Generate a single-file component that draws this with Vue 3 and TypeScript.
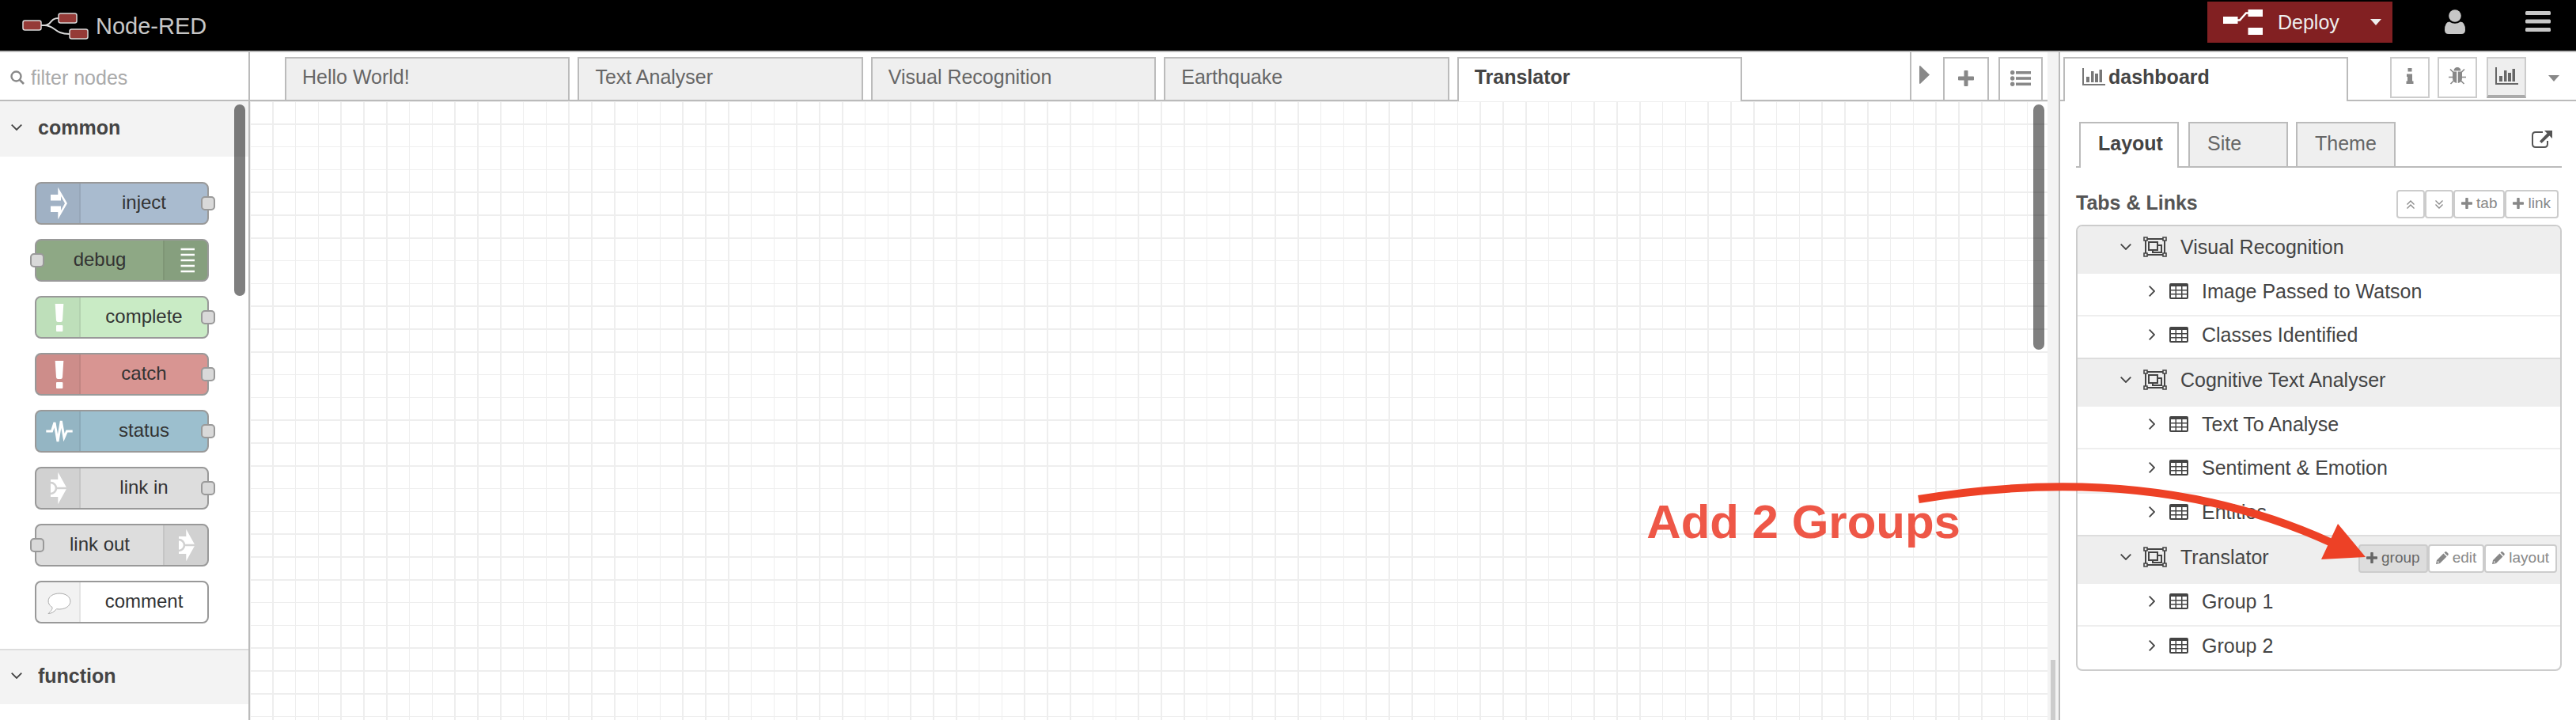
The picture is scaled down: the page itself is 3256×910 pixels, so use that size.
<script setup lang="ts">
import { ref } from 'vue'

interface PaletteNode {
  label: string
  icon: string
  tone: string
  side: 'left' | 'right'
  port: 'in' | 'out' | 'none'
}

interface DashboardTab {
  name: string
  groups: string[]
  actions: boolean
}

const filter = ref('')

const nodes: PaletteNode[] = [
  { label: 'inject', icon: 'n-inject', tone: 'inject', side: 'left', port: 'out' },
  { label: 'debug', icon: 'n-debug', tone: 'debug', side: 'right', port: 'in' },
  { label: 'complete', icon: 'n-alert', tone: 'complete', side: 'left', port: 'out' },
  { label: 'catch', icon: 'n-alert', tone: 'catch', side: 'left', port: 'out' },
  { label: 'status', icon: 'n-status', tone: 'status', side: 'left', port: 'out' },
  { label: 'link in', icon: 'n-link', tone: 'link', side: 'left', port: 'out' },
  { label: 'link out', icon: 'n-link', tone: 'link', side: 'right', port: 'in' },
  { label: 'comment', icon: 'n-comment', tone: 'comment', side: 'left', port: 'none' },
]

const flows = ['Hello World!', 'Text Analyser', 'Visual Recognition', 'Earthquake', 'Translator']
const activeFlow = ref('Translator')

const panels = ['Layout', 'Site', 'Theme']
const activePanel = ref('Layout')

const tabs: DashboardTab[] = [
  { name: 'Visual Recognition', groups: ['Image Passed to Watson', 'Classes Identified'], actions: false },
  { name: 'Cognitive Text Analyser', groups: ['Text To Analyse', 'Sentiment & Emotion', 'Entities'], actions: false },
  { name: 'Translator', groups: ['Group 1', 'Group 2'], actions: true },
]
</script>

<template>
  <div class="editor">
    <svg class="defs" width="0" height="0" aria-hidden="true">
      <symbol id="n-inject" viewBox="0 0 56 50">
        <path fill="#fff" d="M18 14H27.3V4.7L39 25 27.3 45.3V36H18V28.5H31V34L36 25 31 16V21.5H18Z" />
      </symbol>
      <symbol id="n-debug" viewBox="0 0 56 50">
        <path stroke="#fff" stroke-width="2.4" d="M20.5 11H38M20.5 18H38M20.5 25H38M20.5 32H38M20.5 39H38" />
      </symbol>
      <symbol id="n-alert" viewBox="0 0 56 50">
        <path fill="#fff" d="M23.7 8H34.3L33 29Q32.5 31 31 31H27Q25.5 31 25 29Z" />
        <rect x="25" y="35" width="8.4" height="8" rx="1" fill="#fff" />
      </symbol>
      <symbol id="n-status" viewBox="0 0 56 50">
        <path fill="none" stroke="#fff" stroke-width="3" d="M12.3 25H19.5L23 14 27 38 31.3 12 35 33 38.5 25H45.7" />
      </symbol>
      <symbol id="n-link" viewBox="0 0 56 50">
        <path fill="#fff" d="M18 14H27.3V4.7L38.5 25 27.3 45.3V36H18Z" />
        <path fill="none" stroke="#d1d1d1" stroke-width="2.6" d="M18 18A7 7 0 0 1 18 32M25 25H39" />
      </symbol>
      <symbol id="n-comment" viewBox="0 0 56 50">
        <path fill="#fff" stroke="#aaa" d="M20 31.5C12 27 13 14.5 29 14C47 14 48 33.5 29 34L25.5 33.7C22 37.5 19 39.5 15 39.5C18 36.5 20.5 34.5 20 31.5Z" />
      </symbol>
      <symbol id="i-down" viewBox="0 0 14 8"><path fill="none" stroke="currentColor" stroke-width="1.8" d="M.7.7 7 7 13.3.7" /></symbol>
      <symbol id="i-right" viewBox="0 0 8 14"><path fill="none" stroke="currentColor" stroke-width="1.8" d="M.7.7 7 7 .7 13.3" /></symbol>
      <symbol id="i-caret" viewBox="0 0 14 8"><path fill="currentColor" d="M0 0H14L7 8Z" /></symbol>
      <symbol id="i-plus" viewBox="0 0 20 20"><path fill="currentColor" d="M8.5 0H11.5Q12.5 0 12.5 1V7.5H19Q20 7.5 20 8.5V11.5Q20 12.5 19 12.5H12.5V19Q12.5 20 11.5 20H8.500Q7.5 20 7.5 19V12.5H1Q0 12.5 0 11.5V8.5Q0 7.5 1 7.5H7.5V1Q7.5 0 8.5 0Z" /></symbol>
      <symbol id="i-chart" viewBox="0 0 29 22">
        <path fill="currentColor" d="M0 0H2V20H29V22H0ZM5 11H9V18H5ZM11 4H14.5V18H11ZM16 7H20V18H16ZM21.5 2H25V18H21.5Z" />
      </symbol>
      <symbol id="i-group" viewBox="0 0 30 26">
        <g fill="none" stroke="currentColor" stroke-width="2">
          <path d="M4 3H26M4 23H26M3 4V22M27 4V22" />
          <path d="M7 7H18V17H7Z" />
          <path d="M18 11H23V20H12V17" />
        </g>
        <g fill="#eee" stroke="currentColor" stroke-width="1.6">
          <path d="M1 1H5V5H1ZM25 1H29V5H25ZM1 21H5V25H1ZM25 21H29V25H25Z" />
        </g>
      </symbol>
      <symbol id="i-table" viewBox="0 0 24 20">
        <path fill="currentColor" fill-rule="evenodd" d="M2 0H22Q24 0 24 2V18Q24 20 22 20H2Q0 20 0 18V2Q0 0 2 0ZM2 4V8H7.5V4ZM9 4V8H15V4ZM16.5 4V8H22V4ZM2 9.5V13H7.5V9.5ZM9 9.5V13H15V9.5ZM16.5 9.5V13H22V9.5ZM2 14.5V18H7.5V14.5ZM9 14.5V18H15V14.5ZM16.5 14.5V18H22V14.5Z" />
      </symbol>
      <symbol id="i-pencil" viewBox="0 0 16 16">
        <path fill="currentColor" fill-rule="evenodd" d="M0 16 1 11 9.5 2.5 13.5 6.5 5 15ZM2.500 12 4 13.5 2.8 14.2 1.8 13.2ZM10.5 1.5 12 0Q13 0 14 1L15.5 2.5Q16 3.5 15.5 4.5L14.5 5.5Z" />
      </symbol>
    </svg>

    <header class="header">
      <div class="brand">
        <svg class="logo" viewBox="0 0 84 34" aria-hidden="true">
          <path fill="none" stroke="#d9d9d9" stroke-width="2" d="M24 16H28C38 16 34 7 46 7M28 16C42 16 40 27 60 27" />
          <g fill="#953a37" stroke="#d9d9d9" stroke-width="1.5">
            <rect x="1" y="10" width="23" height="12" rx="2.5" />
            <rect x="46" y="1" width="23" height="12" rx="2.5" />
            <rect x="60" y="21" width="23" height="12" rx="2.5" />
          </g>
        </svg>
        <span class="brand-name">Node-RED</span>
      </div>
      <div class="header-tools">
        <button class="deploy" type="button">
          <svg class="deploy-icon" viewBox="0 0 50 32" aria-hidden="true">
            <path fill="none" stroke="#fff" stroke-width="2.5" d="M18 13.5H21L29 4.5H32" />
            <path fill="#fff" d="M0 9H18.5V18H0ZM31.5 0H50V9H31.5ZM31.5 23H50V32H31.5Z" />
          </svg>
          <span>Deploy</span>
          <svg class="caret" aria-hidden="true"><use href="#i-caret" /></svg>
        </button>
        <button class="icon-button user" type="button" aria-label="User">
          <svg viewBox="0 0 26 32" aria-hidden="true">
            <path fill="#c7c7c7" d="M6 15.5Q13 20 20 15.5Q26 16 26 26Q26 31 21 31H5Q0 31 0 26Q0 16 6 15.5Z" />
            <circle cx="13" cy="8" r="7.8" fill="#c7c7c7" />
          </svg>
        </button>
        <button class="icon-button menu" type="button" aria-label="Menu">
          <svg viewBox="0 0 32 26" aria-hidden="true">
            <g fill="#c7c7c7"><rect width="32" height="5" rx="1.5" /><rect y="10.5" width="32" height="5" rx="1.5" /><rect y="21" width="32" height="5" rx="1.5" /></g>
          </svg>
        </button>
      </div>
    </header>

    <div class="body">
      <aside class="palette">
        <label class="search">
          <svg viewBox="0 0 18 18" aria-hidden="true">
            <circle cx="7.5" cy="7.5" r="6" fill="none" stroke="#888" stroke-width="2.4" />
            <path stroke="#888" stroke-width="2.6" d="M12 12 17 17" />
          </svg>
          <input v-model="filter" type="text" placeholder="filter nodes" aria-label="filter nodes" />
        </label>
        <div class="palette-list">
          <button class="category" type="button"><svg class="chev-down" aria-hidden="true"><use href="#i-down" /></svg>common</button>
          <div class="nodes">
            <div v-for="n in nodes" :key="n.label" class="node" :class="[n.tone, n.side, 'port-' + n.port]">
              <span class="node-icon"><svg width="56" height="50" aria-hidden="true"><use :href="'#' + n.icon" /></svg></span>
              <span class="node-label">{{ n.label }}</span>
            </div>
          </div>
          <button class="category lined" type="button"><svg class="chev-down" aria-hidden="true"><use href="#i-down" /></svg>function</button>
          <div class="scroll-thumb palette-thumb"></div>
        </div>
      </aside>

      <main class="workspace">
        <div class="tabbar">
          <div class="flow-tabs">
            <button v-for="f in flows" :key="f" type="button" class="tab" :class="{ active: f === activeFlow }" @click="activeFlow = f">{{ f }}</button>
          </div>
          <div class="tab-tools">
            <button class="scroll-right" type="button" aria-label="Scroll tabs">
              <svg viewBox="0 0 13 23" aria-hidden="true"><path fill="#888" d="M0 1Q0 0 1 0L13 11.5 1 23Q0 23 0 22Z" /></svg>
            </button>
            <button class="tool add" type="button" aria-label="Add flow"><svg width="20" height="20" aria-hidden="true"><use href="#i-plus" /></svg></button>
            <button class="tool" type="button" aria-label="List flows">
              <svg width="26" height="20" viewBox="0 0 26 20" aria-hidden="true">
                <g fill="#888"><circle cx="2.7" cy="2.7" r="2.7" /><circle cx="2.7" cy="10" r="2.7" /><circle cx="2.7" cy="17.3" r="2.7" /><rect x="7" y="1" width="19" height="3.6" /><rect x="7" y="8.2" width="19" height="3.6" /><rect x="7" y="15.5" width="19" height="3.6" /></g>
              </svg>
            </button>
          </div>
        </div>
        <div class="canvas"><div class="scroll-thumb canvas-thumb"></div></div>
      </main>

      <div class="separator"><div class="handle"></div></div>

      <aside class="sidebar">
        <div class="side-tabs">
          <button class="tab active side-tab" type="button"><svg width="29" height="22" aria-hidden="true"><use href="#i-chart" /></svg>dashboard</button>
          <div class="side-tools">
            <button class="side-tool" type="button" aria-label="Information">
              <svg width="10" height="20" viewBox="0 0 10 20" aria-hidden="true"><path fill="currentColor" d="M2.5 0H7.5V4.5H2.5ZM1 7.5H8V16.5H9.5V20H.5V16.5H2V11H1Z" /></svg>
            </button>
            <button class="side-tool" type="button" aria-label="Debug">
              <svg width="22" height="22" viewBox="0 0 22 22" aria-hidden="true">
                <path fill="currentColor" d="M6.5 4.5A4.5 4.5 0 0 1 15.5 4.5ZM5 5.5H10.2V20Q5 19 5 14ZM11.8 5.5H17V14Q17 19 11.8 20Z" />
                <path fill="none" stroke="currentColor" stroke-width="1.6" d="M2 2.5 6 6.5M20 2.5 16 6.5M0 12.5H5M22 12.5H17M2.5 21 6.5 17M19.5 21 15.5 17" />
              </svg>
            </button>
            <button class="side-tool pressed" type="button" aria-label="Dashboard"><svg width="29" height="22" aria-hidden="true"><use href="#i-chart" /></svg></button>
            <button class="side-more" type="button" aria-label="More"><svg class="caret" aria-hidden="true"><use href="#i-caret" /></svg></button>
          </div>
        </div>

        <div class="side-content">
          <div class="panel-tabs">
            <button v-for="p in panels" :key="p" type="button" class="tab" :class="{ active: p === activePanel }" @click="activePanel = p">{{ p }}</button>
            <a class="open-link" href="#" aria-label="Open dashboard">
              <svg width="26" height="24" viewBox="0 0 26 24" aria-hidden="true">
                <path fill="none" stroke="#555" stroke-width="2" d="M14 3H5Q1 3 1 7V18Q1 22 5 22H16Q20 22 20 18V14" />
                <path fill="#555" d="M16 1H26V11L22.5 7.5 12.5 17 10 14.5 19.5 4.5Z" />
              </svg>
            </a>
          </div>

          <div class="list-head">
            <h2>Tabs &amp; Links</h2>
            <div class="small-buttons">
              <button type="button" class="small square" aria-label="Collapse all"><svg width="10" height="11" viewBox="0 0 10 11" aria-hidden="true"><path fill="none" stroke="currentColor" stroke-width="1.3" d="M.5 5.5 5 1 9.5 5.5M.5 10.5 5 6 9.5 10.5" /></svg></button>
              <button type="button" class="small square" aria-label="Expand all"><svg width="10" height="11" viewBox="0 0 10 11" aria-hidden="true"><path fill="none" stroke="currentColor" stroke-width="1.3" d="M.5.5 5 5 9.5.5M.5 5.5 5 10 9.5 5.5" /></svg></button>
              <button type="button" class="small"><svg width="14" height="14" aria-hidden="true"><use href="#i-plus" /></svg>tab</button>
              <button type="button" class="small"><svg width="14" height="14" aria-hidden="true"><use href="#i-plus" /></svg>link</button>
            </div>
          </div>

          <ul class="tree">
            <li v-for="t in tabs" :key="t.name" class="tree-tab">
              <div class="tree-head">
                <svg class="chev-down" aria-hidden="true"><use href="#i-down" /></svg>
                <svg class="group-icon" width="30" height="26" aria-hidden="true"><use href="#i-group" /></svg>
                <span>{{ t.name }}</span>
                <div v-if="t.actions" class="small-buttons">
                  <button type="button" class="small hovered"><svg width="14" height="14" aria-hidden="true"><use href="#i-plus" /></svg>group</button>
                  <button type="button" class="small"><svg width="16" height="16" aria-hidden="true"><use href="#i-pencil" /></svg>edit</button>
                  <button type="button" class="small"><svg width="16" height="16" aria-hidden="true"><use href="#i-pencil" /></svg>layout</button>
                </div>
              </div>
              <ul class="tree-groups">
                <li v-for="g in t.groups" :key="g">
                  <svg class="chev-right" width="8" height="14" aria-hidden="true"><use href="#i-right" /></svg>
                  <svg class="table-icon" width="24" height="20" aria-hidden="true"><use href="#i-table" /></svg>
                  <span>{{ g }}</span>
                </li>
              </ul>
            </li>
          </ul>
        </div>
      </aside>
    </div>

    <div class="callout">Add 2 Groups</div>
    <svg class="callout-arrow" width="568" height="104" viewBox="0 0 568 104" aria-hidden="true">
      <path fill="none" stroke="#ed4126" stroke-width="10" d="M1 25Q296 -24 523 80" />
      <path fill="#ed4126" d="M531 56 566 98 510 101Z" />
    </svg>
  </div>
</template>

<style>
body {
  margin: 0;
}
</style>

<style scoped>
.editor {
  position: relative;
  display: flex;
  flex-direction: column;
  height: 100vh;
  overflow: hidden;
  background: #fff;
  color: #444;
  font: 25px/30px "Liberation Sans", Arial, sans-serif;
}
.editor *,
.editor *::after {
  box-sizing: border-box;
}
.defs {
  position: absolute;
}
svg {
  display: block;
  flex: none;
}
button {
  margin: 0;
  padding: 0;
  border: 0;
  border-radius: 0;
  background: none;
  color: inherit;
  font: inherit;
  text-align: left;
  cursor: pointer;
}
ul {
  margin: 0;
  padding: 0;
  list-style: none;
}
.header {
  display: flex;
  justify-content: space-between;
  height: 66px;
  background: #000;
  border-bottom: 2px solid #bbb;
}
.brand {
  display: flex;
  gap: 9px;
  padding: 16px 0 0 28px;
}
.logo {
  width: 84px;
  height: 34px;
}
.brand-name {
  color: #c7c7c7;
  font-size: 29px;
  line-height: 34px;
}
.header-tools {
  display: flex;
  align-items: flex-start;
  padding: 2px 32px 0 0;
}
.deploy {
  display: flex;
  align-items: center;
  width: 234px;
  height: 52px;
  padding: 0 14px 0 20px;
  background: #822022;
  color: #eee;
  line-height: 52px;
}
.deploy-icon {
  width: 50px;
  height: 32px;
  margin-right: 19px;
}
.caret {
  width: 14px;
  height: 8px;
}
.deploy .caret {
  margin-left: auto;
}
.icon-button svg {
  width: 100%;
}
.user {
  width: 26px;
  margin: 10px 0 0 66px;
}
.menu {
  width: 32px;
  margin: 12px 0 0 76px;
}
.body {
  display: flex;
  flex: 1;
  min-height: 0;
}
.palette {
  display: flex;
  flex-direction: column;
  width: 316px;
  border-right: 2px solid #bbb;
}
.search {
  display: flex;
  align-items: center;
  gap: 8px;
  height: 62px;
  padding: 4px 12px 0 13px;
  border-bottom: 2px solid #bbb;
}
.search svg {
  width: 18px;
  height: 18px;
}
.search input {
  width: 100%;
  min-width: 0;
  height: 40px;
  padding: 0;
  border: 0;
  outline: 0;
  background: none;
  color: #444;
  font: inherit;
}
.search input::placeholder {
  color: #aaa;
  opacity: 1;
}
.palette-list {
  position: relative;
  flex: 1;
  min-height: 0;
  overflow: hidden;
}
.category {
  display: flex;
  align-items: center;
  gap: 20px;
  width: 100%;
  height: 70px;
  padding: 0 14px 4px;
  background: #f3f3f3;
  font-weight: bold;
}
.category.lined {
  border-top: 2px solid #ddd;
}
.chev-down {
  width: 14px;
  height: 8px;
}
.nodes {
  display: grid;
  gap: 18px;
  padding: 32px 50px 32px 44px;
}
.node {
  position: relative;
  display: flex;
  height: 54px;
  border: 2px solid #999;
  border-radius: 8px;
  color: #333;
  font-size: 24px;
}
.node.right {
  flex-direction: row-reverse;
}
.node-icon {
  width: 56px;
  background: rgba(0, 0, 0, 0.05);
  border-right: 2px solid rgba(0, 0, 0, 0.06);
  border-radius: 6px 0 0 6px;
}
.node.right .node-icon {
  border-right: 0;
  border-left: 2px solid rgba(0, 0, 0, 0.06);
  border-radius: 0 6px 6px 0;
}
.node-label {
  flex: 1;
  line-height: 48px;
  text-align: center;
}
.node::after {
  content: "";
  position: absolute;
  top: 16px;
  width: 18px;
  height: 18px;
  border: 2px solid #999;
  border-radius: 5px;
  background: #d9d9d9;
}
.port-out::after {
  right: -10px;
}
.port-in::after {
  left: -8px;
}
.port-none::after {
  display: none;
}
.inject {
  background: #a9bbcf;
}
.debug {
  background: #8ea885;
}
.complete {
  background: #c9ebc5;
}
.catch {
  background: #d89592;
}
.status {
  background: #9cbfce;
}
.link {
  background: #ddd;
}
.comment {
  background: #fff;
}
.scroll-thumb {
  position: absolute;
  width: 14px;
  border-radius: 7px;
  background: rgba(0, 0, 0, 0.5);
}
.palette-thumb {
  top: 4px;
  right: 4px;
  height: 242px;
}
.workspace {
  display: flex;
  flex: 1;
  flex-direction: column;
  min-width: 0;
}
.tabbar {
  display: flex;
  justify-content: space-between;
  height: 62px;
  padding: 0 6px 0 44px;
  border-bottom: 2px solid #bbb;
}
.flow-tabs {
  display: flex;
  flex: 0 1 1842px;
  gap: 10px;
  min-width: 0;
  padding-top: 6px;
}
.tab {
  border: 2px solid #bbb;
  border-bottom: 0;
  background: #efefef;
  color: #666;
}
.tab.active {
  margin-bottom: -2px;
  background: #fff;
  color: #444;
  font-weight: bold;
}
.flow-tabs .tab {
  flex: 1;
  height: 54px;
  padding: 0 20px 6px;
}
.flow-tabs .tab.active {
  height: 56px;
  padding-bottom: 8px;
}
.tab-tools {
  display: flex;
  align-items: flex-end;
}
.scroll-right {
  height: 60px;
  width: 42px;
  padding: 0 0 4px 10px;
  border-left: 2px solid #bbb;
}
.scroll-right svg {
  width: 13px;
  height: 23px;
}
.tool {
  display: flex;
  align-items: center;
  justify-content: center;
  width: 56px;
  height: 54px;
  padding-bottom: 2px;
  border: 2px solid #bbb;
  border-bottom: 0;
  color: #888;
}
.tool.add {
  width: 58px;
  margin-right: 12px;
}
.canvas {
  --line: #eee;
  position: relative;
  flex: 1;
  background-image:
    linear-gradient(to bottom, var(--line) 1px, transparent 1px 28px, var(--line) 28px 30px, transparent 30px 57px, var(--line) 57px 58px, transparent 58px 86px, var(--line) 86px 87px, transparent 87px 114px, var(--line) 114px 116px, transparent 116px 143px, var(--line) 143px),
    linear-gradient(to right, var(--line) 1px, transparent 1px 28px, var(--line) 28px 30px, transparent 30px 57px, var(--line) 57px 58px, transparent 58px 86px, var(--line) 86px 87px, transparent 87px 114px, var(--line) 114px 116px, transparent 116px 143px, var(--line) 143px);
  background-size: 144px 144px;
}
.canvas-thumb {
  top: 4px;
  right: 4px;
  height: 310px;
}
.separator {
  display: flex;
  align-items: flex-end;
  width: 14px;
  padding-left: 4px;
  background: #f3f3f3;
}
.handle {
  width: 6px;
  height: 76px;
  background: #ccc;
}
.sidebar {
  width: 654px;
  border-left: 2px solid #bbb;
}
.side-tabs {
  display: flex;
  justify-content: space-between;
  height: 62px;
  padding: 6px 21px 0 4px;
  border-bottom: 2px solid #bbb;
}
.side-tab {
  display: flex;
  align-items: center;
  gap: 4px;
  width: 360px;
  height: 56px;
  padding: 0 22px 8px;
}
.side-tab svg {
  color: #777;
}
.side-tools {
  display: flex;
}
.side-tool {
  display: flex;
  align-items: center;
  justify-content: center;
  width: 50px;
  height: 52px;
  margin-right: 10px;
  padding-bottom: 4px;
  border: 2px solid #ccc;
  color: #888;
}
.side-tool.pressed {
  margin: 0 28px 0 2px;
  padding-bottom: 2px;
  border-bottom: 4px solid #aaa;
  background: #eee;
  color: #666;
}
.side-more {
  color: #888;
}
.side-content {
  padding: 26px 18px 0 20px;
}
.panel-tabs {
  display: flex;
  gap: 10px;
  height: 58px;
  padding-left: 4px;
  border-bottom: 2px solid #bbb;
}
.panel-tabs .tab {
  width: 126px;
  height: 56px;
  padding: 0 0 4px 22px;
}
.panel-tabs .tab.active {
  height: 58px;
  margin-right: 2px;
  padding-bottom: 6px;
}
.open-link {
  margin: 10px 12px 0 auto;
}
.list-head {
  display: flex;
  align-items: center;
  justify-content: space-between;
  padding: 28px 4px 8px 0;
}
h2 {
  margin: 0;
  padding-bottom: 4px;
  color: #555;
  font-size: 25px;
  line-height: 30px;
}
.small-buttons {
  display: flex;
}
.small {
  display: flex;
  align-items: center;
  gap: 5px;
  height: 36px;
  padding: 0 8px 2px;
  border: 2px solid #ccc;
  border-radius: 4px;
  background: #fff;
  color: #888;
  font-size: 19px;
}
.small.square {
  justify-content: center;
  width: 36px;
  padding: 0;
}
.small.hovered {
  background: #ddd;
  color: #666;
}
.tree {
  border: 2px solid #ccc;
  border-radius: 8px;
  overflow: hidden;
}
.tree-tab + .tree-tab {
  border-top: 2px solid #ddd;
}
.tree-head {
  display: flex;
  align-items: center;
  height: 60px;
  padding: 0 4px 8px 54px;
  background: #eee;
}
.group-icon {
  margin: 0 17px 0 15px;
}
.tree-head .small-buttons {
  margin: 2px 0 -2px auto;
}
.tree-groups li {
  display: flex;
  align-items: center;
  height: 54px;
  padding: 0 0 8px 90px;
  border-bottom: 2px solid #eee;
}
.tree-groups li:not(:first-child):not(:last-child) {
  height: 56px;
}
.tree-groups li:last-child {
  height: 52px;
  border-bottom: 0;
  padding-bottom: 6px;
}
.tree-tab:last-child .tree-groups li:last-child {
  height: 54px;
}
.table-icon {
  margin: 0 17px 0 18px;
}
.callout {
  position: absolute;
  top: 624px;
  right: 778px;
  color: #ee5747;
  font-size: 60px;
  font-weight: bold;
  line-height: 72px;
}
.callout-arrow {
  position: absolute;
  top: 606px;
  right: 264px;
}
</style>
